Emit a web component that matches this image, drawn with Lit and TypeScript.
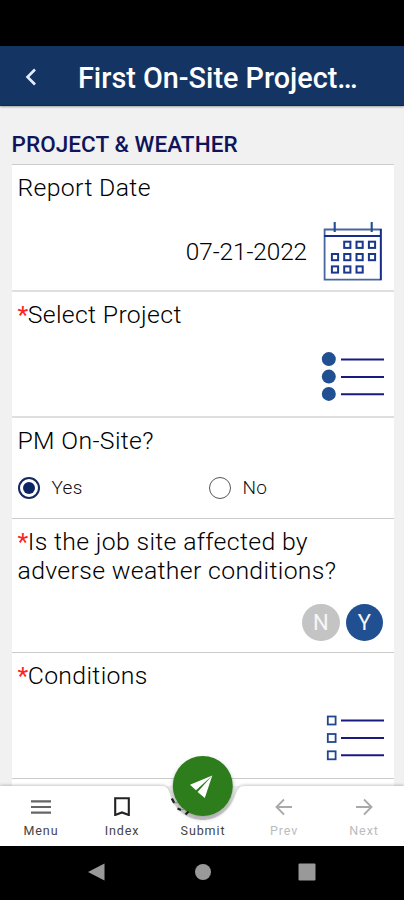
import { LitElement, html, css, svg } from "lit";
import { customElement, state } from "lit/decorators.js";

const DATE_CELLS = [
  [22, 21], [34.3, 21], [46.7, 21],
  [9.7, 33.3], [22, 33.3], [34.3, 33.3], [46.7, 33.3],
  [9.7, 45.7], [22, 45.7], [34.3, 45.7],
];

@customElement("app-root")
export class AppRoot extends LitElement {
  @state() private onSite = "Yes";

  static styles = css`
    :host {
      display: flex;
      flex-direction: column;
      height: 900px;
      width: 404px;
      overflow: hidden;
      background: #f1f1f1;
      font-family: Roboto, "Liberation Sans", sans-serif;
      color: #111;
    }
    svg { display: block; flex: none; }
    .status { height: 46px; flex: none; background: #000; }
    .header {
      height: 60px;
      flex: none;
      box-sizing: border-box;
      display: flex;
      align-items: center;
      gap: 41px;
      padding: 3px 0 0 25px;
      background: #143464;
      border-bottom: 1px solid #0c2858;
      box-shadow: 0 1px 2px rgba(0, 0, 0, 0.35);
      color: #fff;
    }
    .title { margin: 0; padding-top: 1px; font-size: 28.8px; line-height: 36px; font-weight: 500; white-space: nowrap; }
    .form { flex: 1; min-height: 0; overflow: hidden; padding: 0 10px 0 11.5px; }
    .section {
      margin: 0;
      height: 58px;
      box-sizing: border-box;
      padding-top: 24px;
      font-size: 22.5px;
      letter-spacing: 0.07px;
      line-height: 28px;
      font-weight: 500;
      color: #10145a;
      white-space: nowrap;
    }
    .field {
      box-sizing: border-box;
      display: flex;
      flex-direction: column;
      justify-content: space-between;
      background: #fff;
      border-top: 1.5px solid #cbcbcb;
      padding: 8px 10px 0 6px;
    }
    .soft { border-top: 2px solid #dfdfdf; }
    .date { height: 126px; padding-bottom: 9px; padding-right: 11px; }
    .select { height: 126px; padding-bottom: 13px; }
    .radio { height: 102px; padding-bottom: 19px; }
    .toggle { height: 134px; padding-bottom: 11px; padding-right: 11px; }
    .multi { height: 126px; padding-bottom: 14px; }
    .rest { height: 40px; }
    .label { font-size: 24.8px; line-height: 29px; font-weight: 300; letter-spacing: 0.34px; color: #000; white-space: nowrap; }
    .required { color: #f22; font-weight: 400; letter-spacing: -0.5px; }
    .value { display: flex; justify-content: flex-end; align-items: center; }
    .day { padding-top: 1px; font-size: 24.4px; line-height: 30px; font-weight: 300; letter-spacing: -0.1px; color: #000; margin-right: 16px; }
    .options { display: grid; grid-template-columns: 191px 1fr; }
    .option { display: flex; align-items: center; gap: 12px; padding-top: 1px; font-size: 19px; line-height: 22px; font-weight: 300; color: #111; letter-spacing: 0.3px; }
    .ring { box-sizing: border-box; width: 22px; height: 22px; border: 1.7px solid #555; border-radius: 50%; display: grid; place-items: center; }
    .ring.on { border: 2px solid #14285f; }
    .dot { width: 12px; height: 12px; border-radius: 50%; background: #092663; }
    .answers { gap: 6px; }
    .answer { box-sizing: border-box; padding-top: 1px; width: 37.5px; height: 37.5px; border-radius: 50%; display: grid; place-items: center; color: #f6f6f6; background: #c4c4c4; font-size: 22px; font-weight: 400; }
    .answer.on { background: #205092; }
    .nav { height: 60px; flex: none; position: relative; }
    .bar { position: absolute; left: 0; top: -36px; }
    .tabs { position: relative; display: grid; grid-template-columns: 82px 80px 82px 80px 80px; height: 60px; }
    .tab { display: flex; flex-direction: column; align-items: center; justify-content: flex-end; gap: 7px; padding-bottom: 7px; font-size: 12.5px; line-height: 16px; letter-spacing: 0.9px; color: #444; }
    .tab.off { color: #bcbcbc; }
    .system { height: 54px; flex: none; background: #000; display: flex; justify-content: center; align-items: center; gap: 87px; }
    .system svg { margin-top: -2px; }
  `;

  private calendar() {
    return svg`<svg width="60" height="60" viewBox="0 0 60 60" fill="none" stroke="#214c91">
      <path d="M1.6 8.5H57.8V58.7H1.6Z" stroke-width="1.8" stroke="#4766a0"/>
      <path d="M57.8 8V59M1 15H58" stroke-width="1.8" stroke="#152f89"/>
      <path d="M11.7 1V11M48.7 1V11" stroke-width="2.1"/>
      ${DATE_CELLS.map(([x, y]) => svg`<rect x=${x - 0.8} y=${y - 0.3} width="6.2" height="6.2" stroke="#19378b" stroke-width="2"/>`)}
    </svg>`;
  }

  private bullets(square: boolean) {
    return svg`<svg width="64" height="52" viewBox="0 0 64 52">
      ${[8.5, 26, 43.3].map((y) => svg`
        ${square
          ? svg`<rect x="7.8" y=${y - 4} width="7.8" height="8" fill="none" stroke="#20478e" stroke-width="1.8"/>`
          : svg`<circle cx="8.8" cy=${y - 0.4} r="7" fill="#205092"/>`}
        <path d=${`M21 ${y}H64`} stroke="#181a80" stroke-width="2"/>`)}
    </svg>`;
  }

  private radio(name: string) {
    const on = this.onSite === name;
    return html`<div class="option" @click=${() => (this.onSite = name)}>
      <span class="ring ${on ? "on" : ""}">${on ? html`<span class="dot"></span>` : ""}</span>${name}
    </div>`;
  }

  render() {
    return html`
      <div class="status"></div>
      <header class="header">
        <svg width="12" height="18" viewBox="0 0 12 18" fill="none" stroke="#e5edff" stroke-width="2.6"><path d="M10 1.5L2.5 9L10 16.5"/></svg>
        <h1 class="title">First On-Site Project…</h1>
      </header>
      <main class="form">
        <h2 class="section">PROJECT &amp; WEATHER</h2>
        <section class="field date">
          <div class="label">Report Date</div>
          <div class="value"><span class="day">07-21-2022</span>${this.calendar()}</div>
        </section>
        <section class="field select soft">
          <div class="label"><span class="required">*</span>Select Project</div>
          <div class="value">${this.bullets(false)}</div>
        </section>
        <section class="field radio soft">
          <div class="label">PM On-Site?</div>
          <div class="options">${this.radio("Yes")}${this.radio("No")}</div>
        </section>
        <section class="field toggle">
          <div class="label"><span class="required">*</span>Is the job site affected by<br />adverse weather conditions?</div>
          <div class="value answers"><span class="answer">N</span><span class="answer on">Y</span></div>
        </section>
        <section class="field multi">
          <div class="label"><span class="required">*</span>Conditions</div>
          <div class="value">${this.bullets(true)}</div>
        </section>
        <section class="field rest"></section>
      </main>
      <nav class="nav">
        <svg class="bar" width="404" height="96" viewBox="0 0 404 96">
          <defs>
            <filter id="edge" x="-5%" y="-20%" width="110%" height="140%"><feDropShadow dx="0" dy="-1" stdDeviation="1.6" flood-color="#000" flood-opacity=".22"/></filter>
            <filter id="lift" x="-20%" y="-20%" width="140%" height="150%"><feDropShadow dx="0" dy="2.5" stdDeviation="2" flood-color="#000" flood-opacity=".35"/></filter>
          </defs>
          <path filter="url(#edge)" fill="#fff" d="M0 36H161C167 36 168 39 170 44C174 60 187 70 203 70C218 70 230 60 235 46C238 39 239 36 245 36H404V96H0Z"/>
          <circle cx="202.8" cy="36" r="30" fill="#2f7d1f" filter="url(#lift)"/>
          <path d="M171.8 48.5L174.3 53M177.5 58.5L181 60M185.5 64.5L188.5 61.5" stroke="#222" stroke-width="2.4"/>
          <path d="M174.3 53L177.8 52.5M181 60L184 59" stroke="#888" stroke-width="1.2"/>
          <path d="M212.3 25.5L190 34.8L196 40.3Z M212.3 25.5L197.6 42L204.8 48Z" fill="#fff"/>
        </svg>
        <div class="tabs">
          <div class="tab">
            <svg width="20" height="20" viewBox="0 0 20 20"><path d="M0 5.3H20M0 11H20M0 16.7H20" stroke="#666" stroke-width="2.2"/></svg>Menu
          </div>
          <div class="tab">
            <svg width="20" height="20" viewBox="0 0 20 20" fill="none"><path d="M3.2 2.2H16.8V19L10 16.4L3.2 19Z" stroke="#222" stroke-width="2.1"/></svg>Index
          </div>
          <div class="tab">Submit</div>
          <div class="tab off">
            <svg width="20" height="20" viewBox="0 0 20 20" fill="none" stroke="#aaa" stroke-width="1.9"><path d="M18 11H3M10 3.5L2.5 11L10 18.5"/></svg>Prev
          </div>
          <div class="tab off">
            <svg width="20" height="20" viewBox="0 0 20 20" fill="none" stroke="#aaa" stroke-width="1.9"><path d="M2 11H17M10 3.5L17.5 11L10 18.5"/></svg>Next
          </div>
        </div>
      </nav>
      <footer class="system">
        <svg width="20" height="18" viewBox="0 0 20 18"><path d="M0 9L16.5 .5V17.5Z" fill="#999"/></svg>
        <svg width="16" height="16" viewBox="0 0 16 16"><circle cx="8" cy="8" r="8" fill="#999"/></svg>
        <svg width="18" height="18" viewBox="0 0 18 18"><rect x=".5" y=".5" width="17" height="17" rx="1" fill="#999"/></svg>
      </footer>
    `;
  }
}
